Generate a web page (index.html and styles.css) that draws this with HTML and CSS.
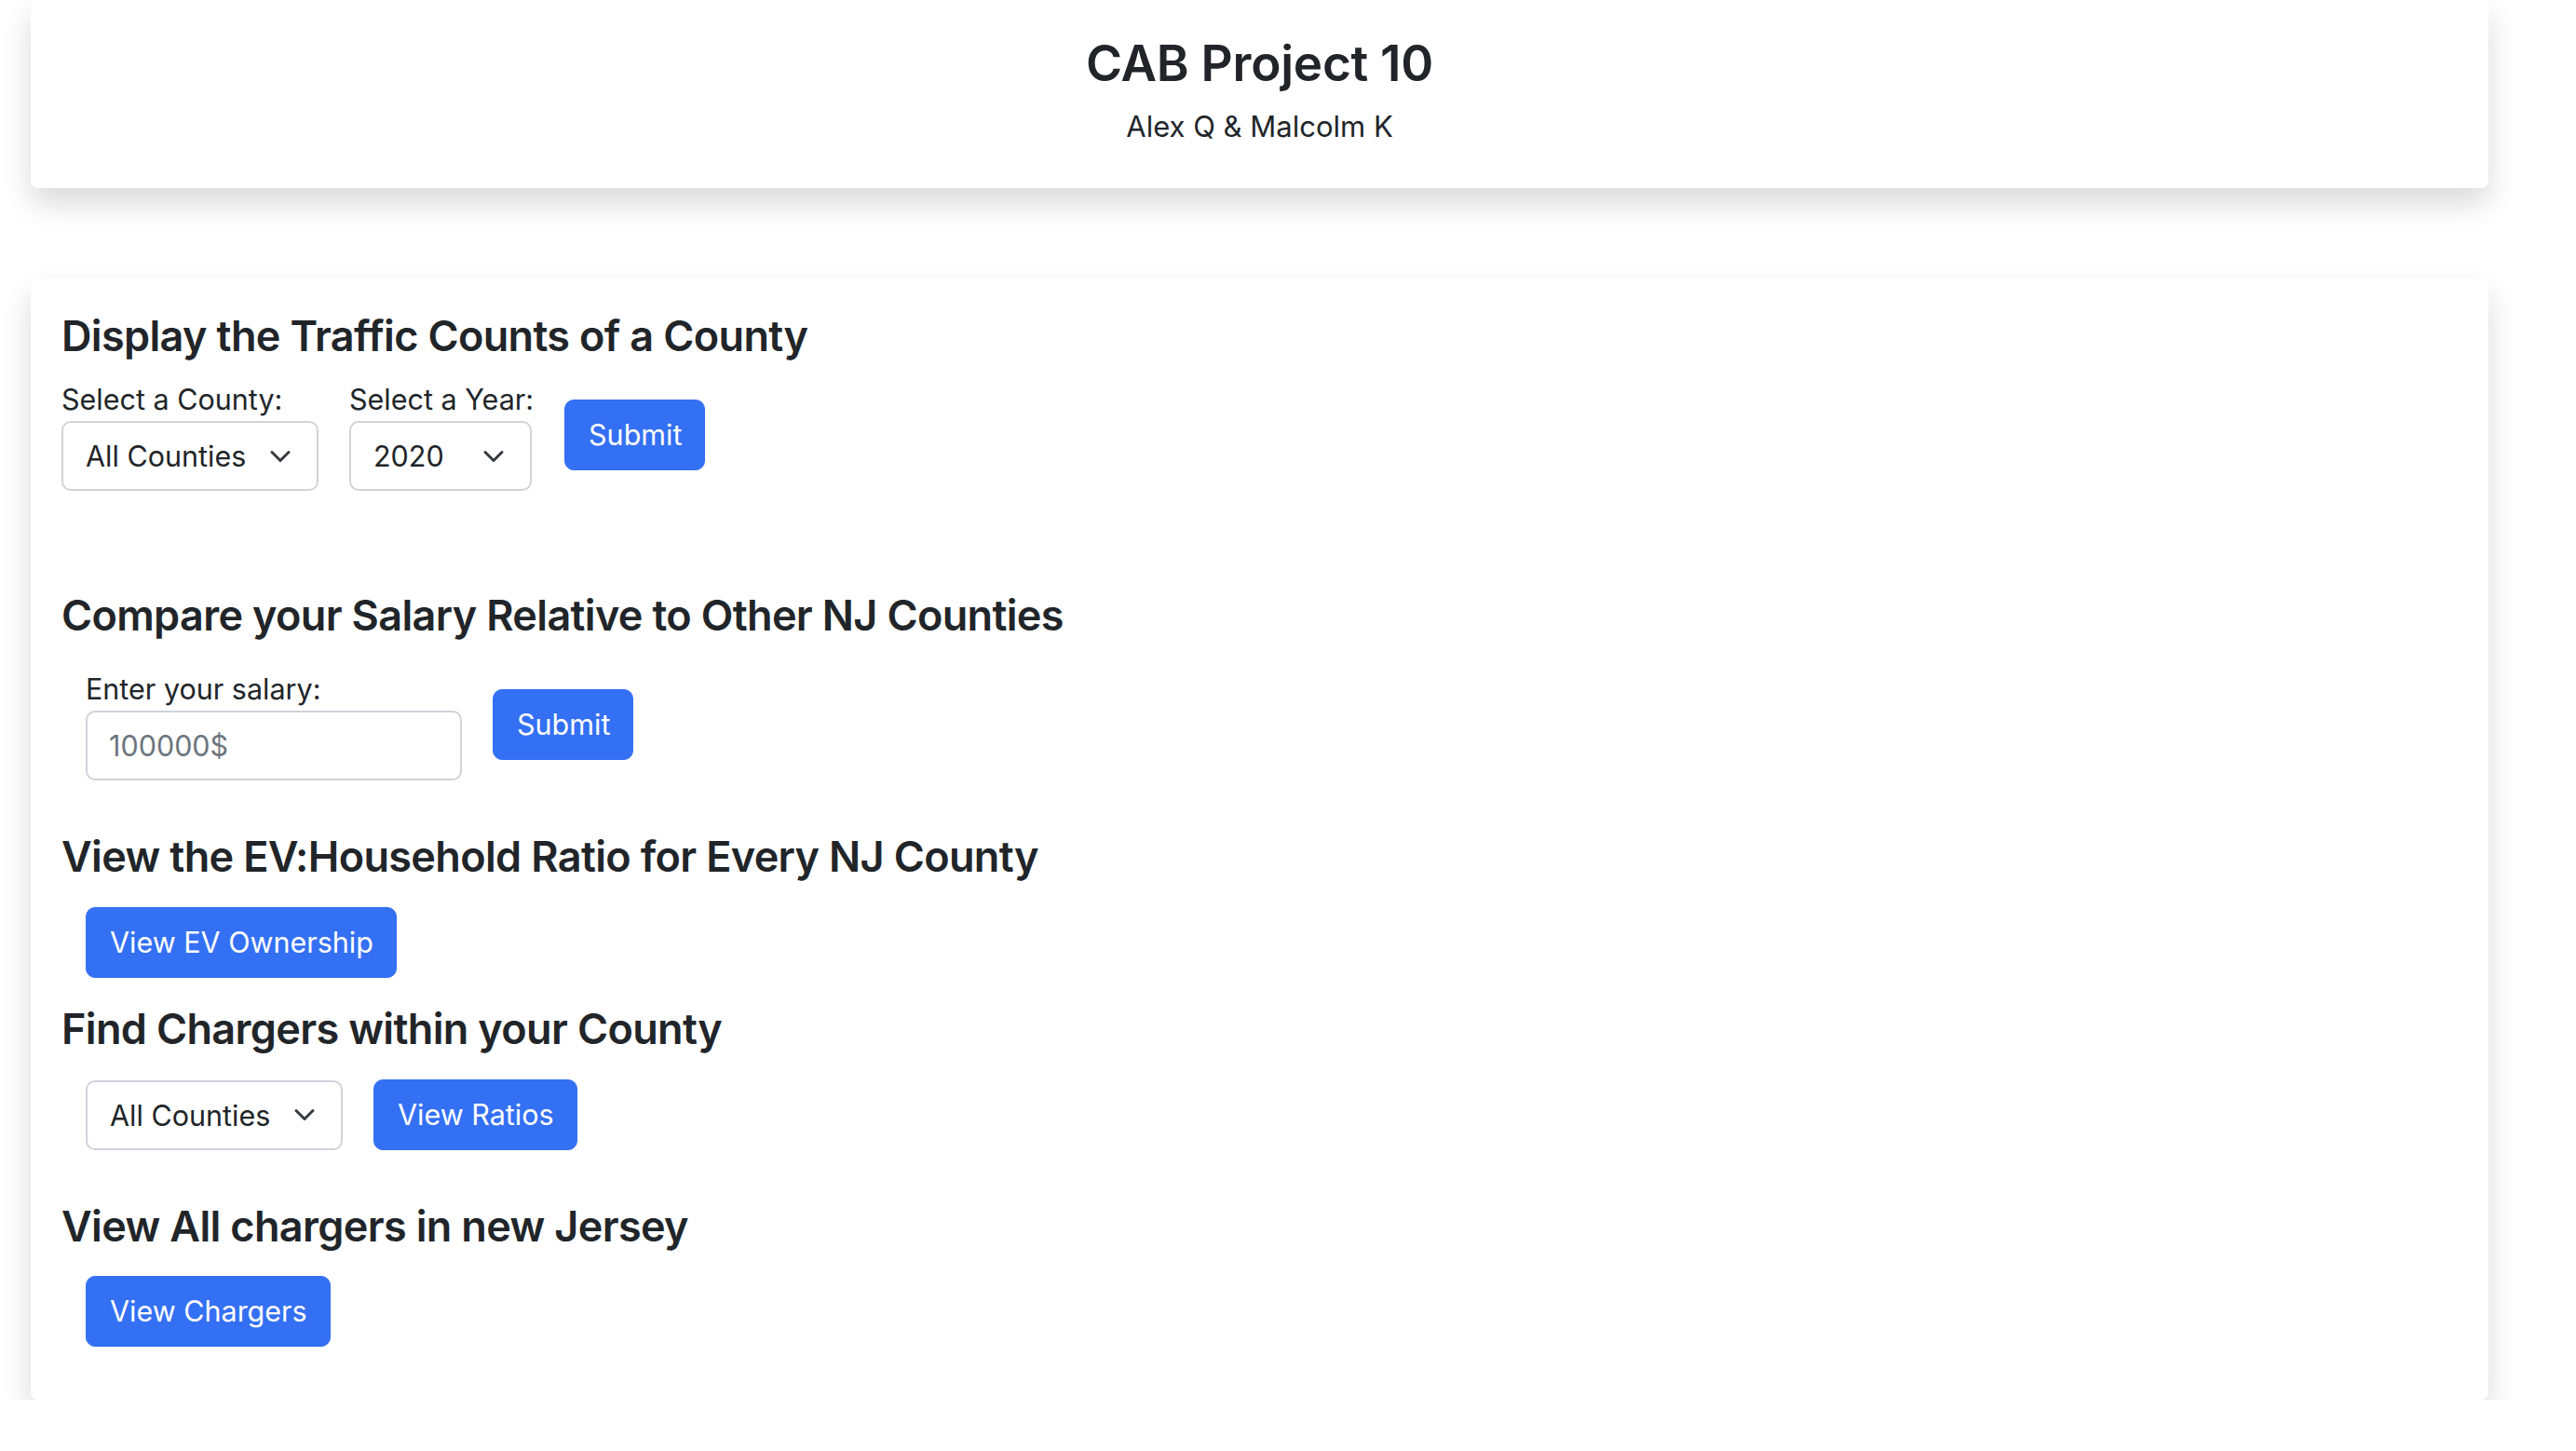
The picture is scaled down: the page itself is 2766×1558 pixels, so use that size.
FILE: index.html
```html
<!DOCTYPE html>
<html lang="en">
<head>
<meta charset="utf-8">
<title>CAB Project 10</title>
<link rel="stylesheet" href="styles.css">
</head>
<body>
<div class="page">
  <header class="card header-card">
    <h1 class="title">CAB Project 10</h1>
    <p class="subtitle">Alex Q &amp; Malcolm K</p>
  </header>

  <main class="card main-card">
    <section class="section s1">
      <h2 class="section-title">Display the Traffic Counts of a County</h2>
      <div class="row">
        <div class="field">
          <label class="label">Select a County:</label>
          <div class="select select-county" role="combobox"><span>All Counties</span><svg class="chev" viewBox="0 0 16 16" width="24" height="24"><path d="m2 5 6 6 6-6" fill="none" stroke="#343a40" stroke-width="2" stroke-linecap="round" stroke-linejoin="round"/></svg></div>
        </div>
        <div class="field">
          <label class="label">Select a Year:</label>
          <div class="select select-year" role="combobox"><span>2020</span><svg class="chev" viewBox="0 0 16 16" width="24" height="24"><path d="m2 5 6 6 6-6" fill="none" stroke="#343a40" stroke-width="2" stroke-linecap="round" stroke-linejoin="round"/></svg></div>
        </div>
        <button class="btn">Submit</button>
      </div>
    </section>

    <section class="section s2">
      <h2 class="section-title">Compare your Salary Relative to Other NJ Counties</h2>
      <div class="row indent">
        <div class="field">
          <label class="label">Enter your salary:</label>
          <input class="input" type="text" placeholder="100000$">
        </div>
        <button class="btn">Submit</button>
      </div>
    </section>

    <section class="section s3">
      <h2 class="section-title">View the EV:Household Ratio for Every NJ County</h2>
      <div class="row indent">
        <button class="btn">View EV Ownership</button>
      </div>
    </section>

    <section class="section s4">
      <h2 class="section-title">Find Chargers within your County</h2>
      <div class="row indent">
        <div class="select select-county" role="combobox"><span>All Counties</span><svg class="chev" viewBox="0 0 16 16" width="24" height="24"><path d="m2 5 6 6 6-6" fill="none" stroke="#343a40" stroke-width="2" stroke-linecap="round" stroke-linejoin="round"/></svg></div>
        <button class="btn">View Ratios</button>
      </div>
    </section>

    <section class="section s5">
      <h2 class="section-title">View All chargers in new Jersey</h2>
      <div class="row indent">
        <button class="btn">View Chargers</button>
      </div>
    </section>
  </main>
</div>
</body>
</html>
```

FILE: styles.css
```css
* { box-sizing: border-box; }

html, body {
  margin: 0;
  padding: 0;
  background: #fff;
}

body {
  font-family: Inter, "Noto Sans", sans-serif;
  color: #212529;
}

.page {
  padding: 0 94px 0 33px;
}

.card {
  background: #fff;
  border-radius: 8px;
  box-shadow: 0 16px 32px rgba(0, 0, 0, 0.15);
}

.header-card {
  padding: 36px 0 44px;
  text-align: center;
  border-radius: 0 0 8px 8px;
}

.title {
  margin: 0 0 12px;
  font-size: 53px;
  line-height: 65px;
  font-weight: 580;
  letter-spacing: -0.25px;
}

.subtitle {
  margin: 0;
  font-size: 31px;
  line-height: 45px;
}

.main-card {
  margin-top: 97px;
  padding: 35px 33px 57px;
}

.section-title {
  margin: 0;
  font-size: 45px;
  line-height: 54px;
  font-weight: 565;
  letter-spacing: -0.65px;
}

.s1 .row { margin-top: 18px; }
.s2 { margin-top: 107px; }
.s2 .row { margin-top: 29px; }
.s3 { margin-top: 55px; }
.s3 .row { margin-top: 27px; }
.s4 { margin-top: 28px; }
.s4 .row { margin-top: 27px; }
.s5 { margin-top: 55px; }
.s5 .row { margin-top: 26px; }

.row {
  display: flex;
  align-items: center;
  gap: 33px;
}

.indent {
  padding-left: 26px;
}

.field {
  display: flex;
  flex-direction: column;
}

.label {
  display: block;
  font-size: 30.5px;
  line-height: 46px;
}

.select {
  display: flex;
  align-items: center;
  justify-content: space-between;
  height: 75px;
  padding: 0 27px 0 24px;
  border: 2px solid #ced4da;
  border-radius: 10px;
  background: #fff;
  font-size: 30.5px;
  line-height: 47px;
}

.select-county { width: 276px; }
.select-year { width: 196px; }

.chev { display: block; flex: none; }

.input {
  width: 404px;
  height: 75px;
  padding: 0 23px;
  border: 2px solid #ced4da;
  border-radius: 10px;
  font-family: Inter, "Noto Sans", sans-serif;
  font-size: 30.5px;
  color: #212529;
  outline: none;
}

.input::placeholder {
  color: #6c757d;
}

.btn {
  height: 76px;
  padding: 0 24px 0 25px;
  border: 1px solid #3470f3;
  border-radius: 10px;
  background: #3470f3;
  color: #fff;
  font-family: Inter, "Noto Sans", sans-serif;
  font-size: 30.5px;
  line-height: 52px;
  cursor: pointer;
}
```
